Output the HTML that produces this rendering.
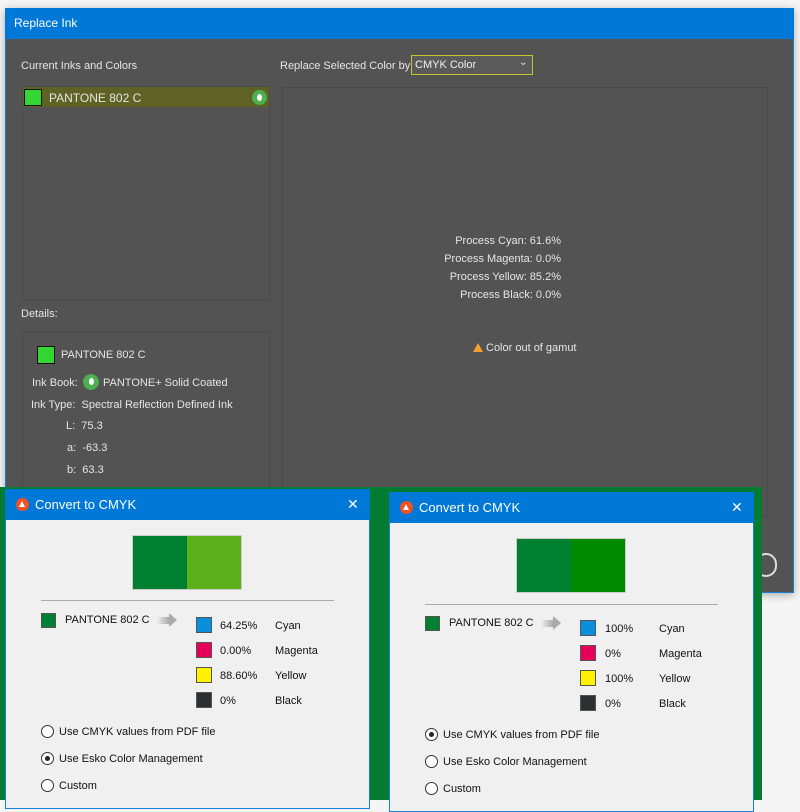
<!DOCTYPE html>
<html><head><style>
*{margin:0;padding:0;box-sizing:border-box}
body{width:800px;height:800px;background:#f5f5f5;position:relative;overflow:hidden;font-family:"Liberation Sans",Arial,sans-serif;font-size:11px}
.a{position:absolute}
.lt{color:#e6e6e6;font-size:11px;white-space:nowrap}
.dk{color:#111;font-size:11px;white-space:nowrap}
.win{background:#f0f0f0;border:1px solid #1a7fd4}
.tb{background:#0078d7;color:#fff;font-size:13px}
.rad{width:13px;height:13px;border:1px solid #333;border-radius:50%;background:#fff}
.rad.on::after{content:"";position:absolute;left:3px;top:3px;width:5px;height:5px;border-radius:50%;background:#222}
.sw{width:16px;height:16px;border:1px solid #555}
.x{color:#fff;font-size:14px}
</style></head><body>
<div class="a" style="left:5px;top:8px;width:789px;height:585px;background:#535353;border:1px solid #1a7fd4;box-shadow:0 2px 8px rgba(0,0,0,.3)"></div>
<div class="a tb" style="left:5px;top:8px;width:789px;height:31px;padding:8px 0 0 9px;font-size:12px">Replace Ink</div>
<div class="a lt" style="left:21px;top:60px">Current Inks and Colors</div>
<div class="a" style="left:22px;top:86px;width:248px;height:215px;border:1px solid #4a4a4a"></div>
<div class="a" style="left:23px;top:87px;width:246px;height:20px;background:#5e6224"></div>
<div class="a" style="left:24px;top:89px;width:18px;height:17px;background:#33d633;border:1px solid #111"></div>
<div class="a lt" style="left:49px;top:91px;font-size:12px">PANTONE 802 C</div>
<div class="a" style="left:252px;top:90px;width:15px;height:15px;border-radius:50%;background:#4caf50"></div>
<div class="a" style="left:257px;top:94px;width:5px;height:7px;border-radius:50%;background:#fff"></div>
<div class="a lt" style="left:280px;top:60px">Replace Selected Color by</div>
<div class="a" style="left:411px;top:55px;width:122px;height:20px;border:1px solid #c6c62c;background:#5a5a5a"></div>
<div class="a lt" style="left:415px;top:59px;color:#f0f0f0">CMYK Color</div>
<div class="a lt" style="left:519px;top:57px;font-size:10px">&#8964;</div>
<div class="a" style="left:282px;top:87px;width:486px;height:430px;border:1px solid #4a4a4a"></div>
<div class="a lt" style="left:400px;top:232px;width:161px;text-align:right;line-height:18px">Process Cyan: 61.6%<br>Process Magenta: 0.0%<br>Process Yellow: 85.2%<br>Process Black: 0.0%</div>
<div class="a" style="left:473px;top:343px;width:0;height:0;border-left:5px solid transparent;border-right:5px solid transparent;border-bottom:9px solid #f0a030"></div>
<div class="a lt" style="left:486px;top:342px">Color out of gamut</div>
<div class="a lt" style="left:21px;top:308px">Details:</div>
<div class="a" style="left:22px;top:331px;width:248px;height:170px;border:1px solid #4a4a4a"></div>
<div class="a" style="left:37px;top:346px;width:18px;height:18px;background:#33d633;border:1px solid #111"></div>
<div class="a lt" style="left:61px;top:349px">PANTONE 802 C</div>
<div class="a lt" style="left:32px;top:377px">Ink Book:</div>
<div class="a" style="left:83px;top:374px;width:16px;height:16px;border-radius:50%;background:#4caf50"></div>
<div class="a" style="left:89px;top:378px;width:5px;height:7px;border-radius:50%;background:#fff"></div>
<div class="a lt" style="left:103px;top:377px">PANTONE+ Solid Coated</div>
<div class="a lt" style="left:31px;top:399px">Ink Type:&nbsp; Spectral Reflection Defined Ink</div>
<div class="a lt" style="left:66px;top:420px">L:&nbsp; 75.3</div>
<div class="a lt" style="left:67px;top:442px">a:&nbsp; -63.3</div>
<div class="a lt" style="left:67px;top:464px">b:&nbsp; 63.3</div>
<div class="a" style="left:755px;top:553px;width:22px;height:24px;border:2px solid #ddd;border-radius:12px"></div>

<div class="a" style="left:0;top:487px;width:762px;height:313px;background:#037b30"></div>

<div class="a win" style="left:5px;top:489px;width:365px;height:320px"></div>
<div class="a tb" style="left:5px;top:489px;width:365px;height:31px"></div>
<div class="a" style="left:16px;top:498px;width:13px;height:13px;border-radius:50%;background:#f25022"></div>
<div class="a" style="left:19px;top:501px;width:0;height:0;border-left:3.5px solid transparent;border-right:3.5px solid transparent;border-bottom:6px solid #fff"></div>
<div class="a" style="left:35px;top:497px;color:#fff;font-size:13px">Convert to CMYK</div>
<div class="a x" style="left:347px;top:496px">&#x2715;</div>
<div class="a" style="left:132px;top:535px;width:110px;height:55px;border:1px solid #ccc;background:linear-gradient(90deg,#008030 0 50%,#5cb01c 50%)"></div>
<div class="a" style="left:41px;top:600px;width:293px;height:1px;background:#aaa"></div>
<div class="a" style="left:41px;top:613px;width:15px;height:15px;background:#008030;border:1px solid #555"></div>
<div class="a dk" style="left:65px;top:614px">PANTONE 802 C</div>
<div class="a" style="left:157px;top:617px;width:12px;height:7px;background:linear-gradient(90deg,#eee,#aaa)"></div>
<div class="a" style="left:169px;top:613px;border-top:7px solid transparent;border-bottom:7px solid transparent;border-left:8px solid #aaa"></div>
<div class="a sw" style="left:196px;top:617px;background:#0a8fdd"></div>
<div class="a sw" style="left:196px;top:642px;background:#e5005a"></div>
<div class="a sw" style="left:196px;top:667px;background:#fff200"></div>
<div class="a sw" style="left:196px;top:692px;background:#2e2f33"></div>
<div class="a dk" style="left:220px;top:614px;line-height:25px">64.25%<br>0.00%<br>88.60%<br>0%</div>
<div class="a dk" style="left:275px;top:614px;line-height:25px">Cyan<br>Magenta<br>Yellow<br>Black</div>
<div class="a rad" style="left:41px;top:725px"></div>
<div class="a dk" style="left:59px;top:726px">Use CMYK values from PDF file</div>
<div class="a rad on" style="left:41px;top:752px"></div>
<div class="a dk" style="left:59px;top:753px">Use Esko Color Management</div>
<div class="a rad" style="left:41px;top:779px"></div>
<div class="a dk" style="left:59px;top:780px">Custom</div>

<div class="a win" style="left:389px;top:492px;width:365px;height:320px"></div>
<div class="a tb" style="left:389px;top:492px;width:365px;height:31px"></div>
<div class="a" style="left:400px;top:501px;width:13px;height:13px;border-radius:50%;background:#f25022"></div>
<div class="a" style="left:403px;top:504px;width:0;height:0;border-left:3.5px solid transparent;border-right:3.5px solid transparent;border-bottom:6px solid #fff"></div>
<div class="a" style="left:419px;top:500px;color:#fff;font-size:13px">Convert to CMYK</div>
<div class="a x" style="left:731px;top:499px">&#x2715;</div>
<div class="a" style="left:516px;top:538px;width:110px;height:55px;border:1px solid #ccc;background:linear-gradient(90deg,#008030 0 50%,#008a00 50%)"></div>
<div class="a" style="left:425px;top:604px;width:293px;height:1px;background:#aaa"></div>
<div class="a" style="left:425px;top:616px;width:15px;height:15px;background:#008030;border:1px solid #555"></div>
<div class="a dk" style="left:449px;top:617px">PANTONE 802 C</div>
<div class="a" style="left:541px;top:620px;width:12px;height:7px;background:linear-gradient(90deg,#eee,#aaa)"></div>
<div class="a" style="left:553px;top:616px;border-top:7px solid transparent;border-bottom:7px solid transparent;border-left:8px solid #aaa"></div>
<div class="a sw" style="left:580px;top:620px;background:#0a8fdd"></div>
<div class="a sw" style="left:580px;top:645px;background:#e5005a"></div>
<div class="a sw" style="left:580px;top:670px;background:#fff200"></div>
<div class="a sw" style="left:580px;top:695px;background:#2e2f33"></div>
<div class="a dk" style="left:605px;top:617px;line-height:25px">100%<br>0%<br>100%<br>0%</div>
<div class="a dk" style="left:659px;top:617px;line-height:25px">Cyan<br>Magenta<br>Yellow<br>Black</div>
<div class="a rad on" style="left:425px;top:728px"></div>
<div class="a dk" style="left:443px;top:729px">Use CMYK values from PDF file</div>
<div class="a rad" style="left:425px;top:755px"></div>
<div class="a dk" style="left:443px;top:756px">Use Esko Color Management</div>
<div class="a rad" style="left:425px;top:782px"></div>
<div class="a dk" style="left:443px;top:783px">Custom</div>
</body></html>
